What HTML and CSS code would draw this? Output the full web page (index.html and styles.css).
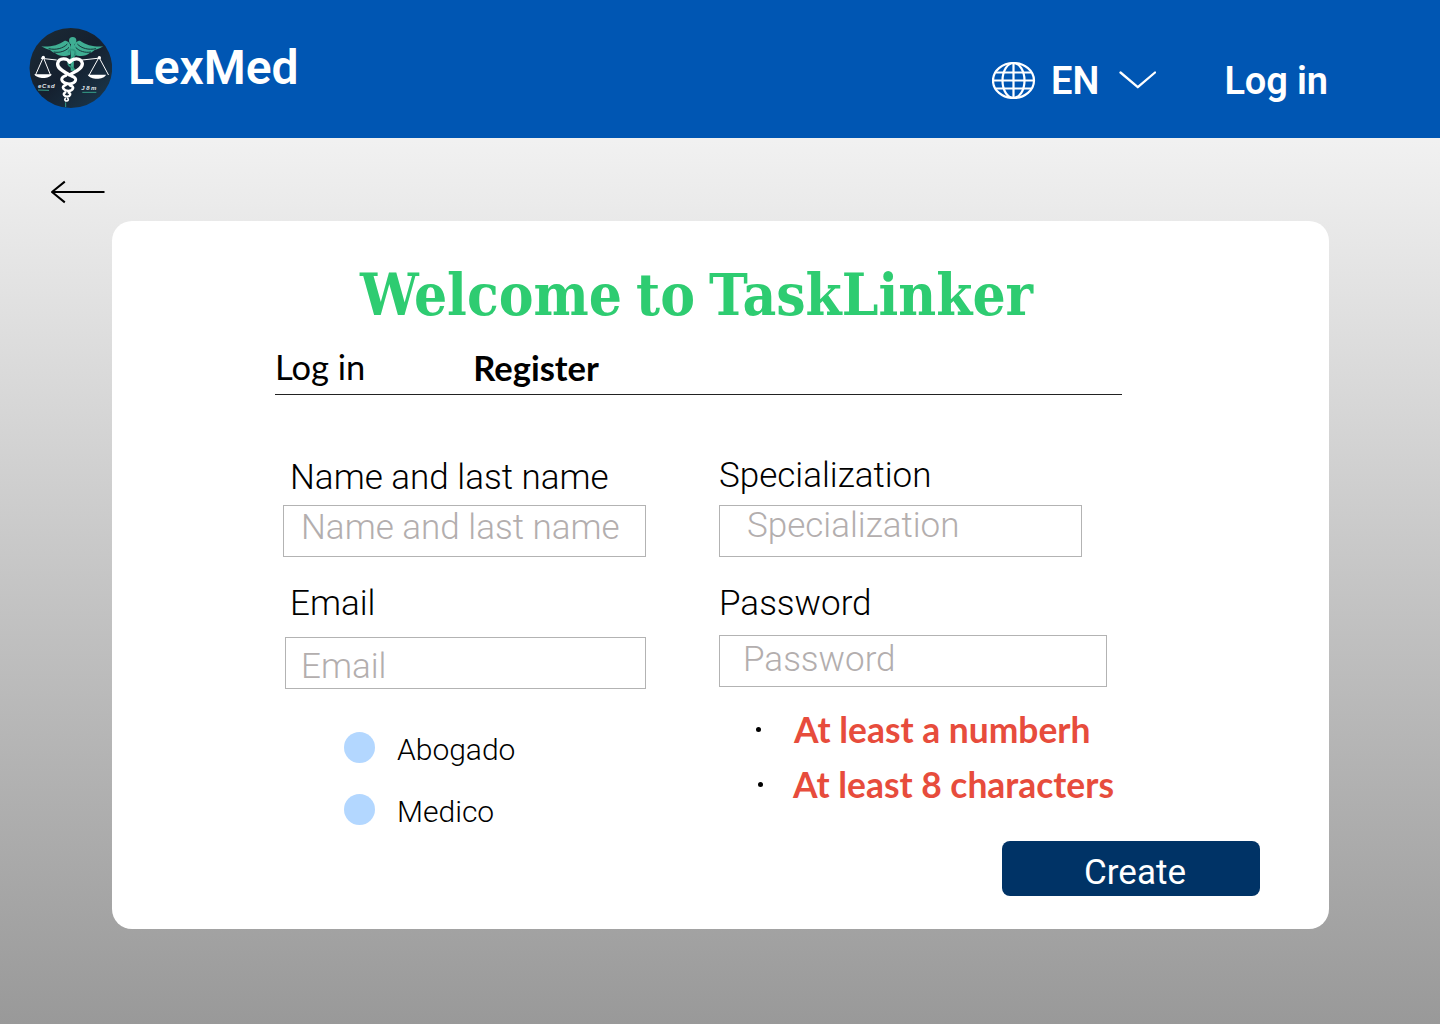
FILE: index.html
```html
<!DOCTYPE html>
<html lang="en">
<head>
<meta charset="utf-8">
<title>LexMed - Register</title>
<link rel="stylesheet" href="styles.css">
</head>
<body>
<header class="topbar">
  <div class="brand">
    <svg class="logo" viewBox="27 24 249 240" aria-hidden="true">
      <defs>
        <linearGradient id="disc" x1="0" y1="0" x2="1" y2="1"><stop offset="0" stop-color="#1c2b35"/><stop offset=".5" stop-color="#15202f"/><stop offset="1" stop-color="#1b3a4e"/></linearGradient>
      </defs>
      <ellipse cx="152.500" cy="144" rx="124" ry="120" fill="url(#disc)"/>
      <g fill="#3fae93">
        <path d="M151 104C137 110 116 110 105 99C98 97 93 93 90 90C80 88 74 84 64 79C86 82 116 76 134 62C144 62 151 70 153 82Z"/>
        <path d="M163 104C177 110 198 110 209 99C216 97 221 93 224 90C234 88 240 84 250 79C228 82 198 76 180 62C170 62 163 70 161 82Z"/>
        <circle cx="158" cy="62" r="11"/>
        <path d="M153 70h10l-2 82h-9z"/>
      </g>
      <g fill="none" stroke="#173338" stroke-width="3">
        <path d="M86 86C108 91 130 85 142 72M101 96C119 99 136 94 147 82M228 86C206 91 184 85 172 72M213 96C195 99 178 94 167 82"/>
      </g>
      <path d="M145 98C147 82 172 88 166 104C160 116 142 117 145 133C149 143 164 142 165 154" fill="none" stroke="#31987f" stroke-width="5"/>
      <g fill="none" stroke="#fff" stroke-linecap="round" stroke-linejoin="round">
        <path d="M149 127C143 113 117 112 113 130C111 147 134 155 148 165C164 155 188 147 187 130C182 112 158 114 149 127" stroke-width="10"/>
        <path d="M137 167C116 174 125 190 147 192C168 190 176 174 154 168" stroke-width="9"/>
        <path d="M137 195C121 201 132 212 145 213C159 212 166 200 150 196" stroke-width="8"/>
        <path d="M136 217C126 222 134 230 142 230C151 229 154 221 146 218" stroke-width="7"/>
        <path d="M136 235c-4 4 0 8 4 8s7-5 3-8" stroke-width="5"/>
        <path d="M64 115L109 120M187 120L241 114M70 112L47 164M70 112L91 164M237 112L208 164M237 112L265 164" stroke-width="3"/>
      </g>
      <g fill="#fff">
        <path d="M43 163h52c-5 15-44 15-52 0zM203 164h55c-6 16-47 17-55 0z"/>
        <circle cx="70" cy="112" r="5"/><circle cx="238" cy="113" r="5"/>
      </g>
      <g class="logo-text"><text x="54" y="204" textLength="50">eCsd</text><text x="184" y="209" textLength="45">J8m</text></g>
      <path d="M54 210l33 1M187 217h42M137 247v14" stroke="#36a18a" stroke-width="3"/>
    </svg>
    <span class="brand-name">LexMed</span>
  </div>
  <nav class="nav">
    <svg class="globe" viewBox="0 0 44 38" fill="none" stroke="#fff" stroke-width="2.200" aria-hidden="true">
      <ellipse cx="21.500" cy="19.500" rx="20.500" ry="17.500"/><ellipse cx="21.500" cy="19.500" rx="11" ry="17.500"/>
      <path d="M21.500 2v35M1 19.500h41M4 11.500h35M4 27.500h35"/>
    </svg>
    <span class="lang">EN</span>
    <svg class="chevron" viewBox="0 0 38 20" fill="none" stroke="#fff" stroke-width="2.300" stroke-linecap="round" stroke-linejoin="round" aria-hidden="true"><path d="M2.500 2.500L19.800 17.200L37 2.500"/></svg>
    <a class="login">Log in</a>
  </nav>
</header>
<main class="page">
  <svg class="back" viewBox="0 0 56 24" fill="none" stroke="#000" stroke-width="2" stroke-linejoin="round" aria-label="Back"><path d="M54.500 12H2M14.800 1.600L2 12L14.800 22.400"/></svg>
  <section class="card">
    <h1 class="title">Welcome to TaskLinker</h1>
    <div class="tabs"><span class="tab">Log in</span><span class="tab tab-active">Register</span></div>
    <form class="form">
      <div class="col col-left">
        <label class="label" for="name">Name and last name</label>
        <input class="field field-name" id="name" placeholder="Name and last name">
        <label class="label label-second" for="email">Email</label>
        <input class="field field-email" id="email" placeholder="Email">
        <div class="roles">
          <div class="role"><span class="dot"></span><span>Abogado</span></div>
          <div class="role"><span class="dot"></span><span>Medico</span></div>
        </div>
      </div>
      <div class="col col-right">
        <label class="label" for="spec">Specialization</label>
        <input class="field field-spec" id="spec" placeholder="Specialization">
        <label class="label label-second" for="pass">Password</label>
        <input class="field field-pass" id="pass" placeholder="Password">
        <ul class="rules">
          <li class="rule">At least a numberh</li>
          <li class="rule rule-last">At least 8 characters</li>
        </ul>
        <button class="create" type="button">Create</button>
      </div>
    </form>
  </section>
</main>
</body>
</html>
```
FILE: styles.css
```css
* { box-sizing: border-box; }

body {
  margin: 0;
  min-height: 1024px;
  background: linear-gradient(#fff, #999);
  font-family: Roboto, sans-serif;
  color: #000;
}

.topbar {
  height: 138px;
  padding: 28px 112px 0 29px;
  display: flex;
  justify-content: space-between;
  align-items: flex-start;
  background: #0056b3;
  color: #fff;
  font-weight: 600;
}

.brand { display: flex; gap: 16px; }
.logo { width: 83px; height: 80px; }
.logo-text { font: italic bold 18px "Liberation Sans", sans-serif; fill: #e5ecef; }
.brand-name { font-size: 48px; line-height: 56px; margin-top: 12px; letter-spacing: -0.1px; }

.nav { display: flex; align-items: flex-start; padding-top: 30px; font-size: 38px; line-height: 46px; }
.globe { width: 44px; height: 38px; margin: 3px 15px 0 0; }
.chevron { width: 38px; height: 20px; margin: 12px 68px 0 19px; }
.login { letter-spacing: -0.1px; }

.page { padding: 42px 111px 0 112px; }
.back { display: block; width: 56px; height: 24px; margin: 0 0 17px -62px; }

.card { height: 708px; background: #fff; border-radius: 20px; padding: 35px 69px 0 163px; }

.title {
  margin: 0 0 14px 85px;
  font: bold 58px/78px "DejaVu Serif Condensed", "DejaVu Serif", serif;
  word-spacing: -4px;
  color: #2ecc71;
  white-space: nowrap;
}

.tabs {
  display: flex;
  gap: 108px;
  width: 847px;
  height: 47px;
  border-bottom: 1px solid #222;
  font: 400 34.5px/38px Lato, sans-serif;
}
.tab-active { font-weight: 700; padding-top: 1px; }

.form { display: grid; grid-template-columns: 436px 1fr; padding-left: 8px; margin-top: 59px; }
.col { display: flex; flex-direction: column; align-items: flex-start; }
.col-left { padding-top: 2px; }
.label { font-weight: 300; font-size: 35px; line-height: 44px; }
.col-left .label { padding-left: 7px; }
.label-second { margin-top: 25px; }

.field {
  width: 363px;
  height: 52px;
  margin: 0;
  border: 1px solid #b3b3b3;
  border-radius: 0;
  background: none;
  font: 300 35px/42px Roboto, sans-serif;
  outline: 0;
}
.field::placeholder { color: #b3aeae; opacity: 1; }
.field-name { margin-top: 5px; padding: 0 0 8px 17px; }
.field-email { margin: 11px 0 0 2px; width: 361px; padding: 6px 0 0 15px; }
.field-spec { margin-top: 7px; padding: 0 0 12px 27px; }
.field-pass { margin-top: 9px; width: 388px; padding: 0 0 4px 23px; }

.roles { display: grid; gap: 31px; margin: 43px 0 0 61px; }
.role { display: flex; gap: 22px; height: 31px; font-weight: 300; font-size: 30px; line-height: 36px; }
.dot { width: 31px; height: 31px; border-radius: 50%; background: #b3d7ff; }

.rules { list-style: none; margin: 15px 0 0; padding: 0 0 0 37px; }
.rule { display: flex; align-items: center; gap: 33px; height: 55px; font: 700 35.4px/55px Lato, sans-serif; color: #e74c3c; white-space: nowrap; }
.rule::before { content: ""; width: 5px; height: 5px; border-radius: 50%; background: #000; }
.rule-last { padding-left: 2px; gap: 30px; }

.create {
  align-self: flex-end;
  width: 258px;
  height: 55px;
  margin-top: 29px;
  padding: 8px 0 0 8px;
  border: 0;
  border-radius: 8px;
  background: #036;
  color: #fff;
  font: 400 35px/42px Roboto, sans-serif;
}
```
